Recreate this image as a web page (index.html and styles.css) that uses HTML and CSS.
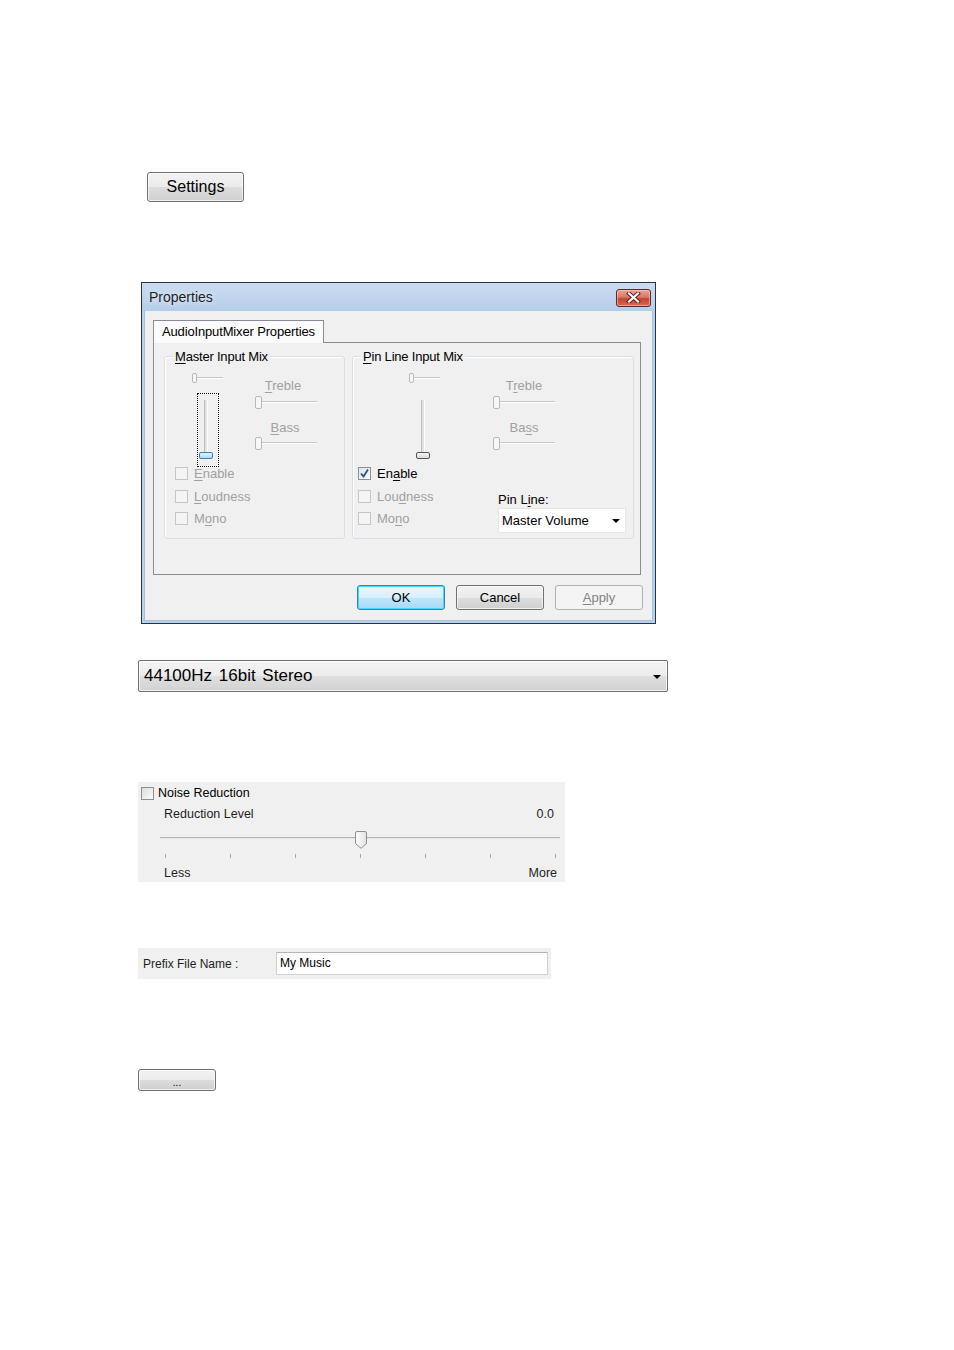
FILE: index.html
```html
<!DOCTYPE html>
<html lang="en">
<head>
    <meta charset="utf-8">
    <title>Recorder settings</title>
    <link rel="stylesheet" href="styles.css">
</head>
<body>
    <div class="page">
        <!-- 설정 버튼 -->
        <button class="btn settings-btn">Settings</button>

        <!-- 속성 대화상자 -->
        <div class="dialog">
            <div class="titlebar">
                <span class="title">Properties</span>
                <button class="close-btn">
                    <svg width="15" height="11" viewBox="0 0 15 11">
                        <path d="M3 1.5 L12 9.5 M12 1.5 L3 9.5" stroke="#5a1f18" stroke-width="4" stroke-linecap="square"/>
                        <path d="M3 1.5 L12 9.5 M12 1.5 L3 9.5" stroke="#fff" stroke-width="2.2" stroke-linecap="square"/>
                    </svg>
                </button>
            </div>
            <div class="client">
                <div class="tabs">
                    <div class="tab">AudioInputMixer Properties</div>
                </div>
                <div class="tab-panel">
                    <div class="group group-master">
                        <span class="legend"><u>M</u>aster Input Mix</span>
                        <div class="group-top">
                            <div class="col-a">
                                <div class="mini-slider"><span class="mini-thumb"></span></div>
                                <div class="vslider focused">
                                    <span class="vtrack"></span>
                                    <span class="vthumb active"></span>
                                </div>
                            </div>
                            <div class="col-b">
                                <div class="slider-label label-treble"><u>T</u>reble</div>
                                <div class="hslider"><span class="hthumb"></span></div>
                                <div class="slider-label label-bass"><u>B</u>ass</div>
                                <div class="hslider"><span class="hthumb"></span></div>
                            </div>
                        </div>
                        <div class="checks">
                            <label class="check disabled"><span class="box"></span><span><u>E</u>nable</span></label>
                            <label class="check disabled"><span class="box"></span><span><u>L</u>oudness</span></label>
                            <label class="check disabled"><span class="box"></span><span>M<u>o</u>no</span></label>
                        </div>
                    </div>

                    <div class="group group-pin">
                        <span class="legend"><u>P</u>in Line Input Mix</span>
                        <div class="group-top">
                            <div class="col-a">
                                <div class="mini-slider"><span class="mini-thumb"></span></div>
                                <div class="vslider">
                                    <span class="vtrack"></span>
                                    <span class="vthumb"></span>
                                </div>
                            </div>
                            <div class="col-b">
                                <div class="slider-label">T<u>r</u>eble</div>
                                <div class="hslider"><span class="hthumb"></span></div>
                                <div class="slider-label label-bass">Ba<u>s</u>s</div>
                                <div class="hslider"><span class="hthumb"></span></div>
                            </div>
                        </div>
                        <div class="pin-bottom">
                            <div class="checks">
                                <label class="check checked">
                                    <span class="box">
                                        <svg width="11" height="11" viewBox="0 0 11 11">
                                            <path d="M2 5.5 L4.5 8.5 L9 1.5" fill="none" stroke="#2a4f86" stroke-width="1.8"/>
                                        </svg>
                                    </span>
                                    <span>En<u>a</u>ble</span>
                                </label>
                                <label class="check disabled"><span class="box"></span><span>Lou<u>d</u>ness</span></label>
                                <label class="check disabled"><span class="box"></span><span>Mo<u>n</u>o</span></label>
                            </div>
                            <div class="pin-line">
                                <div class="pin-line-label">Pin L<u>i</u>ne:</div>
                                <div class="pin-select">Master Volume<span class="arrow"></span></div>
                            </div>
                        </div>
                    </div>
                </div>
                <div class="dialog-buttons">
                    <button class="btn dlg-btn default">OK</button>
                    <button class="btn dlg-btn">Cancel</button>
                    <button class="btn dlg-btn disabled"><u>A</u>pply</button>
                </div>
            </div>
        </div>

        <!-- 포맷 선택 -->
        <div class="combo">44100Hz 16bit Stereo<span class="arrow"></span></div>

        <!-- 노이즈 제거 -->
        <div class="noise-panel">
            <label class="check noise-check"><span class="box"></span><span>Noise Reduction</span></label>
            <div class="noise-row">
                <span>Reduction Level</span>
                <span>0.0</span>
            </div>
            <div class="track-slider">
                <span class="track-line"></span>
                <svg class="track-thumb" width="12" height="18" viewBox="0 0 12 18">
                    <defs>
                        <linearGradient id="thumbFill" x1="0" y1="0" x2="1" y2="0">
                            <stop offset="0" stop-color="#ffffff"/>
                            <stop offset="1" stop-color="#e2e2e2"/>
                        </linearGradient>
                    </defs>
                    <path d="M0.5 2 Q0.5 0.5 2 0.5 H10 Q11.5 0.5 11.5 2 V12.5 L6 17.3 L0.5 12.5 Z" fill="url(#thumbFill)" stroke="#8c8c8c"/>
                </svg>
            </div>
            <div class="ticks">
                <span></span><span></span><span></span><span></span><span></span><span></span><span></span>
            </div>
            <div class="noise-row less-more">
                <span>Less</span>
                <span>More</span>
            </div>
        </div>

        <!-- 파일명 -->
        <div class="prefix-panel">
            <span class="prefix-label">Prefix File Name :</span>
            <div class="prefix-input">My Music</div>
        </div>

        <button class="btn dots-btn">...</button>
    </div>
</body>
</html>
```

FILE: styles.css
```css
/* 기본 */
html, body {
    margin: 0;
    padding: 0;
    background: #fff;
}

body {
    font-family: "Liberation Sans", Arial, sans-serif;
    font-size: 12px;
    color: #000;
}

.page {
    width: 954px;
    height: 1350px;
    display: flex;
    flex-direction: column;
    align-items: flex-start;
}

u {
    text-decoration: underline;
    text-underline-offset: 2px;
}

.btn {
    font-family: "Liberation Sans", Arial, sans-serif;
    color: #000;
    border: 1px solid #707070;
    border-radius: 3px;
    background: linear-gradient(#f2f2f2 0%, #ebebeb 50%, #dddddd 51%, #cfcfcf 100%);
    box-shadow: inset 0 0 0 1px rgba(255, 255, 255, 0.7);
    padding: 0;
    margin: 0;
    cursor: pointer;
}

.settings-btn {
    margin: 172px 0 0 147px;
    width: 97px;
    height: 30px;
    font-size: 16px;
}

/* 대화상자 */
.dialog {
    margin: 80px 0 0 141px;
    border: 1px solid #23344a;
    background: #b9d1ea;
    padding: 0 2px 2px;
    width: 509px;
    font-size: 13px;
}

.titlebar {
    height: 28px;
    margin: 0 -2px;
    padding: 0 4px 0 7px;
    display: flex;
    align-items: center;
    justify-content: space-between;
    background: linear-gradient(#cadcf1, #b6cde9);
}

.title {
    font-size: 14px;
    color: #1e1e1e;
    text-shadow: 0 0 6px rgba(255, 255, 255, 0.9);
}

.close-btn {
    width: 35px;
    height: 18px;
    margin-top: 1px;
    border: 1px solid #5d2a24;
    border-radius: 3px;
    background: linear-gradient(#e9a497 0%, #d87868 45%, #c4442f 55%, #d36a52 100%);
    box-shadow: inset 0 0 0 1px rgba(255, 200, 190, 0.6);
    display: flex;
    align-items: center;
    justify-content: center;
    padding: 0;
}

.client {
    background: #f0f0f0;
    height: 310px;
    padding: 9px 11px 0 8px;
    box-sizing: border-box;
    border: 1px solid #a9bfd8;
    border-top: none;
}

.tabs {
    display: flex;
}

.tab {
    height: 23px;
    box-sizing: border-box;
    padding: 0 8px 0 8px;
    line-height: 21px;
    border: 1px solid #898c95;
    border-bottom: none;
    background: #fbfbfb;
    margin-bottom: -1px;
    position: relative;
    z-index: 1;
    letter-spacing: -0.15px;
}

.tab-panel {
    border: 1px solid #898c95;
    background: #f0f0f0;
    height: 233px;
    box-sizing: border-box;
    padding: 13px 0 0 10px;
    display: flex;
    gap: 7px;
    align-items: flex-start;
}

/* 그룹박스 */
.group {
    position: relative;
    height: 183px;
    box-sizing: border-box;
    border: 1px solid #d5dfe5;
    border-radius: 3px;
    box-shadow: inset 1px 1px 0 #fff;
    padding-top: 16px;
}

.group-master {
    width: 181px;
    padding-left: 10px;
}

.group-pin {
    width: 282px;
    padding-left: 5px;
}

.legend {
    position: absolute;
    top: -8px;
    left: 8px;
    padding: 0 2px;
    background: #f0f0f0;
    line-height: 15px;
    letter-spacing: -0.2px;
}

.group-top {
    display: flex;
    height: 94px;
}

.group-master .col-a {
    width: 80px;
}

.group-pin .col-a {
    width: 135px;
}

.mini-slider {
    position: relative;
    width: 31px;
    height: 10px;
    margin-left: 17px;
}

.group-pin .mini-slider {
    margin-left: 51px;
}

.mini-slider::before {
    content: '';
    position: absolute;
    left: 4px;
    right: 0;
    top: 4px;
    height: 1px;
    border-bottom: 1px solid #fff;
    background: #c6c6c6;
}

.mini-thumb {
    position: absolute;
    left: 0;
    top: 0;
    width: 3px;
    height: 8px;
    border: 1px solid #b8b8b8;
    border-radius: 2px;
    background: #f7f7f7;
}

.vslider {
    position: relative;
    width: 22px;
    height: 74px;
    box-sizing: border-box;
    margin: 10px 0 0 22px;
    border: 1px dotted transparent;
}

.group-pin .vslider {
    margin-left: 56px;
}

.vslider.focused {
    border-color: #000;
}

.vtrack {
    position: absolute;
    left: 6px;
    top: 6px;
    width: 2px;
    height: 55px;
    border-left: 1px solid #bdbdbd;
    border-right: 1px solid #fff;
    background: #e2e2e2;
}

.vthumb {
    position: absolute;
    left: 1px;
    top: 58px;
    width: 12px;
    height: 5px;
    border: 1px solid #555;
    border-radius: 2px;
    background: linear-gradient(#f4f4f4, #d9d9d9);
}

.vthumb.active {
    border-color: #3c7fb1;
    background: linear-gradient(#e4f4fc, #a9dbf6);
}

.col-b {
    width: 62px;
    display: flex;
    flex-direction: column;
    align-items: center;
}

.slider-label {
    margin-top: 5px;
    line-height: 15px;
    color: #a0a0a0;
}

.label-treble {
    padding-right: 6px;
}

.label-bass {
    margin-top: 11px;
}

.group-master .label-bass {
    padding-right: 2px;
}

.hslider {
    position: relative;
    width: 62px;
    height: 13px;
    margin-top: 3px;
}

.label-bass + .hslider {
    margin-top: 2px;
}

.hslider::before {
    content: '';
    position: absolute;
    left: 6px;
    right: 0;
    top: 5px;
    height: 1px;
    border-bottom: 1px solid #fff;
    background: #c6c6c6;
}

.hthumb {
    position: absolute;
    left: 0;
    top: 0;
    width: 5px;
    height: 11px;
    border: 1px solid #b8b8b8;
    border-radius: 2px;
    background: #f7f7f7;
}

/* 체크박스 */
.checks {
    display: flex;
    flex-direction: column;
    gap: 9.5px;
}

.check {
    display: flex;
    align-items: center;
    gap: 6px;
    height: 13px;
    line-height: 15px;
    white-space: nowrap;
}

.box {
    width: 13px;
    height: 13px;
    box-sizing: border-box;
    border: 1px solid #8e8f8f;
    background: linear-gradient(135deg, #dcdcdc, #fbfbfb);
    display: flex;
    align-items: center;
    justify-content: center;
    flex-shrink: 0;
}

.check.disabled {
    color: #a0a0a0;
}

.check.disabled .box {
    border-color: #c6c6c6;
    background: #f4f4f4;
}

.check.checked .box {
    background: linear-gradient(135deg, #e0e6ee, #f8f9fb);
}

.pin-bottom {
    display: flex;
}

.pin-bottom .checks {
    width: 140px;
}

.pin-line {
    margin-top: 25px;
}

.pin-line-label {
    line-height: 15px;
}

.pin-select {
    position: relative;
    margin-top: 1px;
    width: 128px;
    height: 25px;
    box-sizing: border-box;
    border: 1px solid #e6e6e6;
    background: #fff;
    line-height: 23px;
    padding-left: 3px;
}

.pin-select .arrow {
    position: absolute;
    right: 5px;
    top: 10px;
    border-left: 4px solid transparent;
    border-right: 4px solid transparent;
    border-top: 4px solid #000;
}

/* 대화상자 버튼 */
.dialog-buttons {
    display: flex;
    justify-content: flex-end;
    gap: 11px;
    margin-top: 10px;
    margin-right: -2px;
}

.dlg-btn {
    width: 88px;
    height: 25px;
    font-size: 13px;
}

.dlg-btn.default {
    border-color: #3c7fb1;
    background: linear-gradient(#eaf6fd 0%, #d9f0fc 50%, #bee6fd 51%, #a7d9f5 100%);
    box-shadow: inset 0 0 0 1px #48d8fb;
}

.dlg-btn.disabled {
    border-color: #adb2b5;
    background: #f4f4f4;
    color: #838383;
    box-shadow: none;
}

/* 콤보 */
.combo {
    position: relative;
    margin: 36px 0 0 138px;
    width: 530px;
    height: 32px;
    box-sizing: border-box;
    border: 1px solid #707070;
    border-radius: 2px;
    background: linear-gradient(#f4f4f4 0%, #ececec 50%, #dfdfdf 51%, #d2d2d2 100%);
    box-shadow: inset 0 0 0 1px rgba(255, 255, 255, 0.7);
    font-size: 17px;
    line-height: 30px;
    padding-left: 5px;
    word-spacing: 2px;
}

.combo .arrow {
    position: absolute;
    right: 6px;
    top: 14px;
    border-left: 4px solid transparent;
    border-right: 4px solid transparent;
    border-top: 4px solid #000;
}

/* 노이즈 패널 */
.noise-panel {
    margin: 90px 0 0 138px;
    width: 427px;
    height: 100px;
    box-sizing: border-box;
    background: #f0f0f0;
    padding-top: 4px;
    font-size: 12.5px;
    display: flex;
    flex-direction: column;
}

.noise-check {
    margin-left: 3px;
    gap: 4px;
    height: 14px;
}

.noise-row {
    display: flex;
    justify-content: space-between;
    padding: 0 11px 0 26px;
    margin-top: 7px;
    line-height: 14px;
    color: #1e1e1e;
}

.track-slider {
    position: relative;
    margin: 10px 0 0 22px;
    width: 400px;
    height: 18px;
}

.track-line {
    position: absolute;
    left: 0;
    right: 0;
    top: 6px;
    height: 1px;
    background: #b4b4b4;
    border-bottom: 1px solid #e6e6e6;
}

.track-thumb {
    position: absolute;
    left: 195px;
    top: 0;
}

.ticks {
    display: flex;
    justify-content: space-between;
    margin: 5px 0 0 27px;
    width: 391px;
    height: 4px;
}

.ticks span {
    width: 1px;
    background: #a8a8a8;
}

.less-more {
    margin-top: 8px;
    padding-right: 8px;
}

/* 파일명 */
.prefix-panel {
    margin: 66px 0 0 138px;
    width: 413px;
    height: 31px;
    box-sizing: border-box;
    background: #f0f0f0;
    display: flex;
    align-items: center;
    padding-left: 5px;
}

.prefix-label {
    width: 133px;
    color: #1e1e1e;
}

.prefix-input {
    width: 272px;
    height: 23px;
    box-sizing: border-box;
    border: 1px solid #d2d2d2;
    border-top-color: #b5b5b5;
    background: #fff;
    line-height: 21px;
    padding-left: 3px;
}

.dots-btn {
    margin: 90px 0 0 138px;
    width: 78px;
    height: 22px;
    font-size: 10px;
    line-height: 26px;
}
```
